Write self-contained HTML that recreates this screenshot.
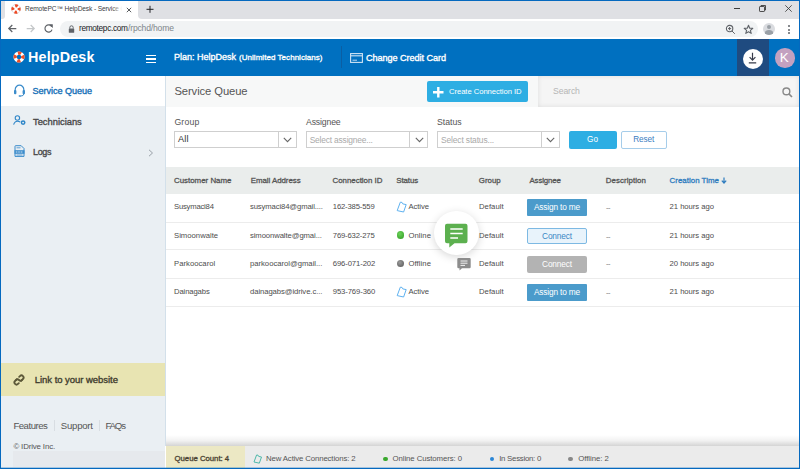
<!DOCTYPE html>
<html><head><meta charset="utf-8"><title>RemotePC HelpDesk</title>
<style>
html,body{margin:0;padding:0;width:800px;height:469px;overflow:hidden;background:#fff;font-family:"Liberation Sans",sans-serif;}
.a{position:absolute;}
.t{position:absolute;white-space:pre;font-family:"Liberation Sans",sans-serif;}
svg{position:absolute;overflow:visible;}
</style></head><body>
<!-- browser chrome -->
<div class=a style="left:0;top:0;width:800px;height:39px;background:#fff"></div>
<div class=a style="left:0;top:0;width:4.5px;height:19px;background:#dfe0e4;border-bottom-right-radius:3px"></div>
<div class=a style="left:137.5px;top:0;width:663px;height:19px;background:#dfe0e4;border-bottom-left-radius:4px"></div>
<div class=a style="left:60px;top:21px;width:698px;height:16px;background:#f1f3f4;border-radius:8px"></div>
<!-- favicon -->
<svg style="left:10.7px;top:4.2px" width="10" height="10" viewBox="0 0 12 12">
 <circle cx="6" cy="6" r="5.4" fill="#fff" stroke="#cdd5dd" stroke-width="0.8"/>
 <circle cx="6" cy="6" r="3.7" fill="none" stroke="#ee4a24" stroke-width="3.8" stroke-dasharray="2.906 2.906" transform="rotate(-22.5 6 6)"/>
 <circle cx="6" cy="6" r="1.7" fill="#fff"/>
</svg>

<!-- tab close -->
<svg style="left:126px;top:6.5px" width="6" height="6" viewBox="0 0 6 6"><path d="M0.8 0.8L5.2 5.2M5.2 0.8L0.8 5.2" stroke="#3c4043" stroke-width="0.85"/></svg>
<!-- new tab + -->
<svg style="left:146px;top:5px" width="8" height="8" viewBox="0 0 8 8"><path d="M4 0.8V7.8M0.5 4.3H7.5" stroke="#202124" stroke-width="1"/></svg>
<!-- window controls -->
<div class=a style="left:733.5px;top:8px;width:6px;height:1px;background:#3c3c3c"></div>
<svg style="left:758px;top:4px" width="9" height="9" viewBox="0 0 9 9"><rect x="1.5" y="2.5" width="5" height="5" rx="0.6" fill="none" stroke="#3c3c3c" stroke-width="0.9"/><path d="M3 2.2V1.5H7.5V6H6.8" fill="none" stroke="#3c3c3c" stroke-width="0.9"/></svg>
<svg style="left:784px;top:4px" width="9" height="9" viewBox="0 0 9 9"><path d="M1.3 1.3L7.7 7.7M7.7 1.3L1.3 7.7" stroke="#3c3c3c" stroke-width="0.85"/></svg>
<!-- nav -->
<svg style="left:7px;top:23.4px" width="11" height="11" viewBox="0 0 11 11"><path d="M9.3 5.5H1.8M5.3 2L1.8 5.5L5.3 9" fill="none" stroke="#5f6368" stroke-width="1.25"/></svg>
<svg style="left:25px;top:23.4px" width="11" height="11" viewBox="0 0 11 11"><path d="M1.7 5.5H9.2M5.7 2L9.2 5.5L5.7 9" fill="none" stroke="#c4c7c9" stroke-width="1.25"/></svg>
<svg style="left:43px;top:23.4px" width="11" height="11" viewBox="0 0 11 11"><path d="M8.7 3.7A3.6 3.6 0 1 0 9 6.6" fill="none" stroke="#5f6368" stroke-width="1.15"/><path d="M6.6 1.6H9.5V4.5Z" fill="#5f6368" stroke="#5f6368" stroke-width="0.6"/></svg>
<!-- lock -->
<svg style="left:67.5px;top:24.5px" width="7" height="8" viewBox="0 0 7 8"><path d="M1.8 3.6V2.5A1.7 1.7 0 0 1 5.2 2.5V3.6" fill="none" stroke="#5f6368" stroke-width="1"/><rect x="0.8" y="3.5" width="5.4" height="4.2" rx="0.5" fill="#5f6368"/></svg>
<!-- zoom, star -->
<svg style="left:725px;top:24px" width="11" height="11" viewBox="0 0 11 11"><circle cx="4.6" cy="4.6" r="3.2" fill="none" stroke="#5f6368" stroke-width="1.1"/><path d="M7 7L9.8 9.8M4.6 3V6.2M3 4.6H6.2" stroke="#5f6368" stroke-width="1"/></svg>
<svg style="left:743px;top:24px" width="11" height="11" viewBox="0 0 11 11"><path d="M5.5 1.2L6.7 4.2L9.8 4.3L7.4 6.3L8.2 9.4L5.5 7.7L2.8 9.4L3.6 6.3L1.2 4.3L4.3 4.2Z" fill="none" stroke="#5f6368" stroke-width="1.1" stroke-linejoin="round"/></svg>
<!-- profile -->
<div class=a style="left:763px;top:23px;width:12px;height:12px;border-radius:50%;background:#dadce0;overflow:hidden">
 <div class=a style="left:4px;top:2.2px;width:4px;height:4px;border-radius:50%;background:#9aa0a6"></div>
 <div class=a style="left:2px;top:7px;width:8px;height:5px;border-radius:50% 50% 0 0;background:#9aa0a6"></div>
</div>
<div class=a style="left:788px;top:25px;width:2px;height:2px;border-radius:50%;background:#5f6368"></div>
<div class=a style="left:788px;top:28.5px;width:2px;height:2px;border-radius:50%;background:#5f6368"></div>
<div class=a style="left:788px;top:32px;width:2px;height:2px;border-radius:50%;background:#5f6368"></div>

<!-- app header -->
<div class=a style="left:0;top:39px;width:800px;height:37px;background:#0070c0"></div>
<svg style="left:12.6px;top:50.9px" width="12" height="12" viewBox="0 0 12 12">
 <circle cx="6" cy="6" r="3.9" fill="none" stroke="#fff" stroke-width="3.3"/>
 <circle cx="6" cy="6" r="3.9" fill="none" stroke="#ef4f26" stroke-width="3.4" stroke-dasharray="3.063 3.063" transform="rotate(-22.5 6 6)"/>
</svg>
<div class=a style="left:146px;top:55px;width:10px;height:1.4px;background:#fff"></div>
<div class=a style="left:146px;top:58.3px;width:10px;height:1.4px;background:#fff"></div>
<div class=a style="left:146px;top:61.6px;width:10px;height:1.4px;background:#fff"></div>
<div class=a style="left:341px;top:46px;width:1px;height:22px;background:#0b5ea3"></div>
<svg style="left:350px;top:53px" width="13" height="10" viewBox="0 0 13 10"><rect x="0.6" y="0.6" width="11.8" height="8.8" fill="none" stroke="#cfe3f4" stroke-width="1.1"/><path d="M0.6 2.8H12.4" stroke="#cfe3f4" stroke-width="1.1"/><path d="M2.5 7.2H7" stroke="#cfe3f4" stroke-width="0.9"/></svg>
<div class=a style="left:737px;top:39px;width:31.5px;height:37px;background:#1f4b80"></div>
<div class=a style="left:742.5px;top:48.6px;width:20px;height:20px;border-radius:50%;background:#fff"></div>
<svg style="left:747px;top:51.5px" width="11" height="12" viewBox="0 0 11 12"><path d="M5.5 0.8V8M2.6 5.2L5.5 8.1L8.4 5.2M1.8 10.8H9.2" fill="none" stroke="#363b4a" stroke-width="1.2"/></svg>
<div class=a style="left:775px;top:48px;width:19.5px;height:19.5px;border-radius:50%;background:#c3a1c0"></div>

<!-- sidebar -->
<div class=a style="left:1px;top:76px;width:164px;height:392px;background:#eaeff3"></div>
<div class=a style="left:165px;top:76px;width:1px;height:370px;background:#d3e0ea"></div>
<div class=a style="left:1px;top:76px;width:164px;height:30px;background:#fff"></div>
<div class=a style="left:1px;top:363px;width:164px;height:33px;background:#e8e4b2"></div>
<div class=a style="left:13px;top:451px;width:152px;height:16px;background:#e6e9ed"></div>
<!-- headset icon -->
<svg style="left:13px;top:84px" width="13" height="13" viewBox="0 0 13 13"><path d="M2.2 7V5.5A4.3 4.3 0 0 1 10.8 5.5V7" fill="none" stroke="#3b8ccb" stroke-width="1.2"/><rect x="1" y="6" width="2.4" height="4.3" rx="1" fill="#3b8ccb"/><rect x="9.6" y="6" width="2.4" height="4.3" rx="1" fill="#3b8ccb"/><path d="M10.8 10Q10.8 12 7.5 12.1" fill="none" stroke="#3b8ccb" stroke-width="1"/><rect x="5.6" y="11.3" width="2.4" height="1.5" rx="0.7" fill="#3b8ccb"/></svg>
<!-- technicians icon -->
<svg style="left:13px;top:114px" width="13" height="12" viewBox="0 0 13 12"><circle cx="4.4" cy="4" r="2.2" fill="none" stroke="#2f86c8" stroke-width="1.1"/><path d="M0.6 10.6Q1.6 7.2 4.4 7.2Q6.2 7.2 7.2 8" fill="none" stroke="#2f86c8" stroke-width="1.1"/><circle cx="10.1" cy="8.6" r="1.7" fill="none" stroke="#2f86c8" stroke-width="1.5"/></svg>
<!-- logs icon -->
<svg style="left:13.5px;top:145px" width="11" height="12.5" viewBox="0 0 11 12.5"><path d="M1 11.4V1.3A0.6 0.6 0 0 1 1.6 0.7H7.2L10 3.5V11.4Z" fill="none" stroke="#3b8ccb" stroke-width="1"/><rect x="0.5" y="5.2" width="10" height="3.6" fill="#3b8ccb"/><path d="M1.8 7H3.4M4.2 7H5.8M6.6 7H8.4" stroke="#cfe2f2" stroke-width="1.2"/><path d="M2.5 2.8H6.5M2.5 10H8.5" stroke="#3b8ccb" stroke-width="0.8"/></svg>
<svg style="left:147.5px;top:148.5px" width="6" height="8" viewBox="0 0 6 8"><path d="M1 0.8L4.5 4L1 7.2" fill="none" stroke="#9aa1a8" stroke-width="1"/></svg>
<!-- link icon -->
<svg style="left:11.1px;top:371.7px" width="16" height="16" viewBox="0 0 16 16"><g transform="translate(8 8) rotate(-45) translate(-6.5 0)" fill="none" stroke="#5c5838" stroke-width="1.8" stroke-linecap="round"><path d="M5.6 -2.1H3A2.1 2.1 0 0 0 3 2.1H4.2"/><path d="M7.4 2.1H10A2.1 2.1 0 0 0 10 -2.1H8.8"/><path d="M4.2 -2.1Q6.5 -2.1 6.5 0Q6.5 2.1 8.8 2.1"/></g></svg>
<div class=a style="left:54px;top:420px;width:1px;height:11px;background:#d8dde2"></div>
<div class=a style="left:99px;top:420px;width:1px;height:11px;background:#d8dde2"></div>

<!-- content header -->
<div class=a style="left:166px;top:76px;width:633px;height:30.5px;background:#f7f8f8"></div>
<div class=a style="left:427px;top:81px;width:101px;height:20.5px;background:#2eaee3;border-radius:2px"></div>
<svg style="left:433px;top:87px" width="11" height="11" viewBox="0 0 11 11"><path d="M5.3 0V10.5M0 5.2H10.5" stroke="#fff" stroke-width="2.4"/></svg>
<div class=a style="left:538px;top:76px;width:261px;height:30.5px;background:#f5f5f5;box-shadow:inset 0 0 5px rgba(0,0,0,0.1)"></div>
<svg style="left:781.5px;top:86.5px" width="11" height="11" viewBox="0 0 11 11"><circle cx="4.4" cy="4.4" r="3.4" fill="none" stroke="#888" stroke-width="1.4"/><path d="M6.9 6.9L10 10" stroke="#888" stroke-width="1.6"/></svg>

<!-- filters -->
<div class=a style="left:174px;top:131.3px;width:120.5px;height:15.2px;border:1px solid #cfcfcf;background:#fff"></div>
<div class=a style="left:278px;top:131.3px;width:1px;height:17px;background:#cfcfcf"></div>
<div class=a style="left:305.5px;top:131.3px;width:120.5px;height:15.2px;border:1px solid #cfcfcf;background:#fff"></div>
<div class=a style="left:409px;top:131.3px;width:1px;height:17px;background:#cfcfcf"></div>
<div class=a style="left:437px;top:131.3px;width:120.5px;height:15.2px;border:1px solid #cfcfcf;background:#fff"></div>
<div class=a style="left:540.5px;top:131.3px;width:1px;height:17px;background:#cfcfcf"></div>
<svg style="left:283px;top:137px" width="9" height="6" viewBox="0 0 9 6"><path d="M0.8 0.8L4.5 4.6L8.2 0.8" fill="none" stroke="#666" stroke-width="1.1"/></svg>
<svg style="left:414.5px;top:137px" width="9" height="6" viewBox="0 0 9 6"><path d="M0.8 0.8L4.5 4.6L8.2 0.8" fill="none" stroke="#666" stroke-width="1.1"/></svg>
<svg style="left:546px;top:137px" width="9" height="6" viewBox="0 0 9 6"><path d="M0.8 0.8L4.5 4.6L8.2 0.8" fill="none" stroke="#666" stroke-width="1.1"/></svg>
<div class=a style="left:568.5px;top:130.5px;width:48px;height:18px;background:#2eaee3;border-radius:2px"></div>
<div class=a style="left:620.5px;top:130.5px;width:44.5px;height:16px;border:1px solid #a6cdea;border-radius:2px;background:#fff"></div>

<div class=t style="left:568.5px;top:135.56px;width:48px;text-align:center;font-size:8.2px;line-height:8.2px;color:#fff">Go</div>
<div class=t style="left:620.5px;top:135.56px;width:46.5px;text-align:center;font-size:8.2px;line-height:8.2px;color:#3a7cbf;letter-spacing:-0.1px">Reset</div>
<!-- table -->
<div class=a style="left:166px;top:167px;width:633px;height:27px;background:#eaedec"></div>
<div class=a style="left:166px;top:221.5px;width:633px;height:1px;background:#ececec"></div>
<div class=a style="left:166px;top:249px;width:633px;height:1px;background:#ececec"></div>
<div class=a style="left:166px;top:277.5px;width:633px;height:1px;background:#ececec"></div>
<div class=a style="left:166px;top:305.5px;width:633px;height:1px;background:#ececec"></div>
<svg style="left:721px;top:177px" width="6" height="7" viewBox="0 0 6 7"><path d="M3 0.5V6M0.8 3.6L3 6L5.2 3.6" fill="none" stroke="#2e7cbf" stroke-width="1.2"/></svg>
<!-- status icons -->
<svg style="left:396px;top:201px" width="12" height="12" viewBox="0 0 12 12"><path d="M4.3 1.2L6 1.4L6.8 2.9L10.2 3.6L7.6 11L1.2 9.6Z" fill="none" stroke="#5fb2f0" stroke-width="1" stroke-linejoin="round"/></svg>
<div class=a style="left:396.5px;top:231px;width:7.5px;height:7.5px;border-radius:50%;background:radial-gradient(circle at 40% 35%,#6cd25a,#2f9a22)"></div>
<div class=a style="left:396.5px;top:259.5px;width:7.5px;height:7.5px;border-radius:50%;background:radial-gradient(circle at 40% 35%,#9a9a9a,#555)"></div>
<svg style="left:396px;top:286px" width="12" height="12" viewBox="0 0 12 12"><path d="M4.3 1.2L6 1.4L6.8 2.9L10.2 3.6L7.6 11L1.2 9.6Z" fill="none" stroke="#5fb2f0" stroke-width="1" stroke-linejoin="round"/></svg>
<!-- assignee buttons -->
<div class=a style="left:527px;top:199px;width:60px;height:17px;background:#4b9bcb;border-radius:1px"></div>
<div class=a style="left:527px;top:228px;width:57.7px;height:13.8px;background:#e8f3fb;border:1px solid #7db9e3;border-radius:2px"></div>
<div class=a style="left:527px;top:255.5px;width:60px;height:17px;background:#b3b3b3;border-radius:2px"></div>
<div class=a style="left:527px;top:284px;width:60px;height:17px;background:#4b9bcb;border-radius:1px"></div>
<div class=t style="left:527px;top:199px;width:60px;height:17px;line-height:17px;text-align:center;font-size:8.3px;color:#fff;letter-spacing:-0.15px">Assign to me</div>
<div class=t style="left:527px;top:228px;width:60px;height:16px;line-height:16px;text-align:center;font-size:8.3px;color:#3a87c4;letter-spacing:-0.15px">Connect</div>
<div class=t style="left:527px;top:255.5px;width:60px;height:17px;line-height:17px;text-align:center;font-size:8.3px;color:#fff;letter-spacing:-0.15px">Connect</div>
<div class=t style="left:527px;top:284px;width:60px;height:17px;line-height:17px;text-align:center;font-size:8.3px;color:#fff;letter-spacing:-0.15px">Assign to me</div>
<!-- chat overlay -->
<div class=a style="left:434px;top:210.7px;width:44.5px;height:44.5px;border-radius:50%;background:#fff;box-shadow:0 2px 8px rgba(0,0,0,0.16)"></div>
<svg style="left:444px;top:223px" width="25" height="26" viewBox="0 0 25 26"><path d="M3 0.8H21.5A2 2 0 0 1 23.5 2.8V18.3A2 2 0 0 1 21.5 20.3H10.5L5.3 24.6V20.3H3A2 2 0 0 1 1 18.3V2.8A2 2 0 0 1 3 0.8Z" fill="#5cb04f"/><path d="M6.3 6H18.7M6.3 10.5H18.7M6.3 15H14" stroke="#fff" stroke-width="1.4"/></svg>
<svg style="left:457px;top:258px" width="14" height="13" viewBox="0 0 14 13"><path d="M1.5 0H12.5A1.2 1.2 0 0 1 13.7 1.2V9A1.2 1.2 0 0 1 12.5 10.2H5L2.5 12.5V10.2H1.5A1.2 1.2 0 0 1 0.3 9V1.2A1.2 1.2 0 0 1 1.5 0Z" fill="#8c8c8c"/><path d="M3.5 3H10.5M3.5 5.2H10.5M3.5 7.4H8" stroke="#fff" stroke-width="0.9"/></svg>

<!-- bottom bar -->
<div class=a style="left:166px;top:435px;width:633px;height:11px;background:linear-gradient(rgba(0,0,0,0),rgba(0,0,0,0.05) 50%,rgba(0,0,0,0.17))"></div>
<div class=a style="left:165.5px;top:446px;width:634px;height:22px;background:#ebebeb"></div>
<div class=a style="left:165.5px;top:446px;width:79px;height:22px;background:#ece8c4"></div>
<svg style="left:253px;top:453.5px" width="10" height="10" viewBox="0 0 12 12"><path d="M4.3 1.2L6 1.4L6.8 2.9L10.2 3.6L7.6 11L1.2 9.6Z" fill="none" stroke="#4fb8aa" stroke-width="1.2" stroke-linejoin="round"/></svg>
<div class=a style="left:383px;top:456.5px;width:4.5px;height:4.5px;border-radius:50%;background:#3aa82e"></div>
<div class=a style="left:489.5px;top:456.5px;width:4.5px;height:4.5px;border-radius:50%;background:#2a86d6"></div>
<div class=a style="left:568.3px;top:456.5px;width:4.5px;height:4.5px;border-radius:50%;background:#888"></div>

<div class=t id="tabtitle" style="left:25.00px;top:5.90px;font-size:6.62px;line-height:6.62px;letter-spacing:-0.124px;font-weight:400;color:#3c4043;">RemotePC™ HelpDesk - Service C</div>
<div class=t  style="left:79.00px;top:24.37px;font-size:8.30px;line-height:8.30px;letter-spacing:-0.328px;font-weight:400;color:#202124;">remotepc.com</div>
<div class=t  style="left:128.00px;top:24.12px;font-size:8.60px;line-height:8.60px;letter-spacing:-0.181px;font-weight:400;color:#80868b;">/rpchd/home</div>
<div class=t  style="left:28.00px;top:49.87px;font-size:14.32px;line-height:14.32px;letter-spacing:0.173px;font-weight:700;color:#fff;">HelpDesk</div>
<div class=t  style="left:174.00px;top:53.48px;font-size:9.00px;line-height:9.00px;letter-spacing:-0.002px;font-weight:400;color:#fff;-webkit-text-stroke:0.35px #fff">Plan: HelpDesk</div>
<div class=t  style="left:239.00px;top:54.33px;font-size:8.00px;line-height:8.00px;letter-spacing:0.043px;font-weight:400;color:#fff;-webkit-text-stroke:0.3px #fff">(Unlimited Technicians)</div>
<div class=t  style="left:366.00px;top:53.70px;font-size:9.10px;line-height:9.10px;letter-spacing:-0.055px;font-weight:400;color:#fff;-webkit-text-stroke:0.35px #fff">Change Credit Card</div>
<div class=t  style="left:779.80px;top:50.91px;font-size:13.46px;line-height:13.46px;letter-spacing:0.522px;font-weight:400;color:#fff;">K</div>
<div class=t  style="left:32.60px;top:86.70px;font-size:9.10px;line-height:9.10px;letter-spacing:-0.050px;font-weight:400;color:#156fb7;-webkit-text-stroke:0.35px #156fb7">Service Queue</div>
<div class=t  style="left:33.00px;top:116.64px;font-size:9.40px;line-height:9.40px;letter-spacing:-0.022px;font-weight:400;color:#4a4a4a;-webkit-text-stroke:0.35px #4a4a4a">Technicians</div>
<div class=t  style="left:33.00px;top:147.98px;font-size:9.00px;line-height:9.00px;letter-spacing:-0.340px;font-weight:400;color:#4a4a4a;-webkit-text-stroke:0.35px #4a4a4a">Logs</div>
<div class=t  style="left:34.80px;top:375.46px;font-size:9.50px;line-height:9.50px;letter-spacing:-0.040px;font-weight:400;color:#3f3d2e;-webkit-text-stroke:0.35px #3f3d2e">Link to your website</div>
<div class=t  style="left:13.40px;top:421.07px;font-size:9.60px;line-height:9.60px;letter-spacing:-0.484px;font-weight:400;color:#555;">Features</div>
<div class=t  style="left:60.80px;top:421.07px;font-size:9.60px;line-height:9.60px;letter-spacing:-0.238px;font-weight:400;color:#555;">Support</div>
<div class=t  style="left:105.40px;top:421.07px;font-size:9.60px;line-height:9.60px;letter-spacing:-1.136px;font-weight:400;color:#555;">FAQs</div>
<div class=t  style="left:13.40px;top:443.21px;font-size:7.90px;line-height:7.90px;letter-spacing:-0.149px;font-weight:400;color:#555;">© IDrive Inc.</div>
<div class=t  style="left:174.40px;top:85.61px;font-size:11.22px;line-height:11.22px;letter-spacing:-0.083px;font-weight:400;color:#555;">Service Queue</div>
<div class=t  style="left:449.00px;top:87.81px;font-size:7.67px;line-height:7.67px;letter-spacing:-0.055px;font-weight:400;color:#fff;">Create Connection ID</div>
<div class=t  style="left:553.00px;top:87.14px;font-size:8.69px;line-height:8.69px;letter-spacing:-0.108px;font-weight:400;color:#b5b5b5;">Search</div>
<div class=t  style="left:174.40px;top:118.44px;font-size:8.70px;line-height:8.70px;letter-spacing:0.204px;font-weight:400;color:#555;">Group</div>
<div class=t  style="left:306.00px;top:118.44px;font-size:8.70px;line-height:8.70px;letter-spacing:-0.156px;font-weight:400;color:#555;">Assignee</div>
<div class=t  style="left:437.10px;top:118.44px;font-size:8.70px;line-height:8.70px;letter-spacing:-0.033px;font-weight:400;color:#555;">Status</div>
<div class=t  style="left:178.00px;top:135.21px;font-size:9.20px;line-height:9.20px;letter-spacing:0.136px;font-weight:400;color:#333;">All</div>
<div class=t  style="left:309.70px;top:135.88px;font-size:8.42px;line-height:8.42px;letter-spacing:-0.184px;font-weight:400;color:#aaa;">Select assignee...</div>
<div class=t  style="left:441.00px;top:135.83px;font-size:8.47px;line-height:8.47px;letter-spacing:-0.155px;font-weight:400;color:#aaa;">Select status...</div>
<div class=t  style="left:174.00px;top:177.01px;font-size:7.90px;line-height:7.90px;letter-spacing:-0.001px;font-weight:400;color:#555;-webkit-text-stroke:0.3px #555">Customer Name</div>
<div class=t  style="left:250.70px;top:177.01px;font-size:7.90px;line-height:7.90px;letter-spacing:-0.042px;font-weight:400;color:#555;-webkit-text-stroke:0.3px #555">Email Address</div>
<div class=t  style="left:332.50px;top:177.01px;font-size:7.90px;line-height:7.90px;letter-spacing:-0.006px;font-weight:400;color:#555;-webkit-text-stroke:0.3px #555">Connection ID</div>
<div class=t  style="left:396.25px;top:177.01px;font-size:7.90px;line-height:7.90px;letter-spacing:-0.080px;font-weight:400;color:#555;-webkit-text-stroke:0.3px #555">Status</div>
<div class=t  style="left:478.75px;top:177.01px;font-size:7.90px;line-height:7.90px;letter-spacing:0.010px;font-weight:400;color:#555;-webkit-text-stroke:0.3px #555">Group</div>
<div class=t  style="left:529.50px;top:177.01px;font-size:7.90px;line-height:7.90px;letter-spacing:-0.143px;font-weight:400;color:#555;-webkit-text-stroke:0.3px #555">Assignee</div>
<div class=t  style="left:605.80px;top:177.01px;font-size:7.90px;line-height:7.90px;letter-spacing:0.068px;font-weight:400;color:#555;-webkit-text-stroke:0.3px #555">Description</div>
<div class=t  style="left:669.50px;top:177.01px;font-size:7.90px;line-height:7.90px;letter-spacing:0.027px;font-weight:400;color:#2e7cbf;-webkit-text-stroke:0.3px #2e7cbf">Creation Time</div>
<div class=t  style="left:174.00px;top:203.48px;font-size:7.70px;line-height:7.70px;letter-spacing:-0.216px;font-weight:400;color:#4d4d4d;">Susymaci84</div>
<div class=t  style="left:250.00px;top:203.48px;font-size:7.70px;line-height:7.70px;letter-spacing:-0.128px;font-weight:400;color:#4d4d4d;">susymaci84@gmail....</div>
<div class=t  style="left:332.80px;top:203.48px;font-size:7.70px;line-height:7.70px;letter-spacing:-0.167px;font-weight:400;color:#4d4d4d;">162-385-559</div>
<div class=t  style="left:408.50px;top:203.48px;font-size:7.70px;line-height:7.70px;letter-spacing:-0.094px;font-weight:400;color:#4d4d4d;">Active</div>
<div class=t  style="left:478.90px;top:203.48px;font-size:7.70px;line-height:7.70px;letter-spacing:0.083px;font-weight:400;color:#4d4d4d;">Default</div>
<div class=t  style="left:606.00px;top:203.74px;font-size:7.40px;line-height:7.40px;letter-spacing:-0.531px;font-weight:400;color:#777;">--</div>
<div class=t  style="left:669.60px;top:203.48px;font-size:7.70px;line-height:7.70px;letter-spacing:-0.050px;font-weight:400;color:#4d4d4d;">21 hours ago</div>
<div class=t  style="left:174.00px;top:232.38px;font-size:7.70px;line-height:7.70px;letter-spacing:0.011px;font-weight:400;color:#4d4d4d;">Simoonwalte</div>
<div class=t  style="left:250.00px;top:232.38px;font-size:7.70px;line-height:7.70px;letter-spacing:-0.096px;font-weight:400;color:#4d4d4d;">simoonwalte@gmai...</div>
<div class=t  style="left:332.80px;top:232.38px;font-size:7.70px;line-height:7.70px;letter-spacing:-0.167px;font-weight:400;color:#4d4d4d;">769-632-275</div>
<div class=t  style="left:408.50px;top:232.38px;font-size:7.70px;line-height:7.70px;letter-spacing:0.048px;font-weight:400;color:#4d4d4d;">Online</div>
<div class=t  style="left:478.90px;top:232.38px;font-size:7.70px;line-height:7.70px;letter-spacing:0.083px;font-weight:400;color:#4d4d4d;">Default</div>
<div class=t  style="left:606.00px;top:232.64px;font-size:7.40px;line-height:7.40px;letter-spacing:-0.531px;font-weight:400;color:#777;">--</div>
<div class=t  style="left:669.60px;top:232.38px;font-size:7.70px;line-height:7.70px;letter-spacing:-0.050px;font-weight:400;color:#4d4d4d;">21 hours ago</div>
<div class=t  style="left:174.00px;top:259.98px;font-size:7.70px;line-height:7.70px;letter-spacing:0.021px;font-weight:400;color:#4d4d4d;">Parkoocarol</div>
<div class=t  style="left:250.00px;top:259.98px;font-size:7.70px;line-height:7.70px;letter-spacing:-0.020px;font-weight:400;color:#4d4d4d;">parkoocarol@gmail...</div>
<div class=t  style="left:332.80px;top:259.98px;font-size:7.70px;line-height:7.70px;letter-spacing:-0.117px;font-weight:400;color:#4d4d4d;">696-071-202</div>
<div class=t  style="left:408.50px;top:259.98px;font-size:7.70px;line-height:7.70px;letter-spacing:0.063px;font-weight:400;color:#4d4d4d;">Offline</div>
<div class=t  style="left:478.90px;top:259.98px;font-size:7.70px;line-height:7.70px;letter-spacing:0.083px;font-weight:400;color:#4d4d4d;">Default</div>
<div class=t  style="left:606.00px;top:260.24px;font-size:7.40px;line-height:7.40px;letter-spacing:-0.531px;font-weight:400;color:#777;">--</div>
<div class=t  style="left:669.60px;top:259.98px;font-size:7.70px;line-height:7.70px;letter-spacing:-0.050px;font-weight:400;color:#4d4d4d;">20 hours ago</div>
<div class=t  style="left:174.00px;top:288.38px;font-size:7.70px;line-height:7.70px;letter-spacing:-0.127px;font-weight:400;color:#4d4d4d;">Dainagabs</div>
<div class=t  style="left:250.00px;top:288.38px;font-size:7.70px;line-height:7.70px;letter-spacing:-0.083px;font-weight:400;color:#4d4d4d;">dainagabs@idrive.c...</div>
<div class=t  style="left:332.80px;top:288.38px;font-size:7.70px;line-height:7.70px;letter-spacing:-0.117px;font-weight:400;color:#4d4d4d;">953-769-360</div>
<div class=t  style="left:408.50px;top:288.38px;font-size:7.70px;line-height:7.70px;letter-spacing:-0.094px;font-weight:400;color:#4d4d4d;">Active</div>
<div class=t  style="left:478.90px;top:288.38px;font-size:7.70px;line-height:7.70px;letter-spacing:0.083px;font-weight:400;color:#4d4d4d;">Default</div>
<div class=t  style="left:606.00px;top:288.64px;font-size:7.40px;line-height:7.40px;letter-spacing:-0.531px;font-weight:400;color:#777;">--</div>
<div class=t  style="left:669.60px;top:288.38px;font-size:7.70px;line-height:7.70px;letter-spacing:-0.050px;font-weight:400;color:#4d4d4d;">21 hours ago</div>
<div class=t  style="left:174.50px;top:455.10px;font-size:7.80px;line-height:7.80px;letter-spacing:-0.029px;font-weight:400;color:#4a4232;-webkit-text-stroke:0.3px #4a4232">Queue Count: 4</div>
<div class=t  style="left:266.00px;top:455.00px;font-size:7.80px;line-height:7.80px;letter-spacing:-0.133px;font-weight:400;color:#555;">New Active Connections: 2</div>
<div class=t  style="left:392.60px;top:455.00px;font-size:7.80px;line-height:7.80px;letter-spacing:-0.094px;font-weight:400;color:#555;">Online Customers: 0</div>
<div class=t  style="left:499.20px;top:455.00px;font-size:7.80px;line-height:7.80px;letter-spacing:-0.249px;font-weight:400;color:#555;">In Session: 0</div>
<div class=t  style="left:578.20px;top:455.00px;font-size:7.80px;line-height:7.80px;letter-spacing:-0.053px;font-weight:400;color:#555;">Offline: 2</div>

<div class=a style="left:112px;top:3px;width:14px;height:14px;background:linear-gradient(90deg,rgba(255,255,255,0),#fff 75%)"></div>
<!-- window frame -->
<div class=a style="left:0;top:0;width:800px;height:1px;background:#0569bf"></div>
<div class=a style="left:0;top:0;width:1px;height:469px;background:#0569bf"></div>
<div class=a style="left:799px;top:0;width:1px;height:469px;background:#0569bf"></div>
<div class=a style="left:0;top:467px;width:800px;height:1px;background:#0569bf;opacity:0.3"></div><div class=a style="left:0;top:468px;width:800px;height:1px;background:#0569bf"></div>
</body></html>
